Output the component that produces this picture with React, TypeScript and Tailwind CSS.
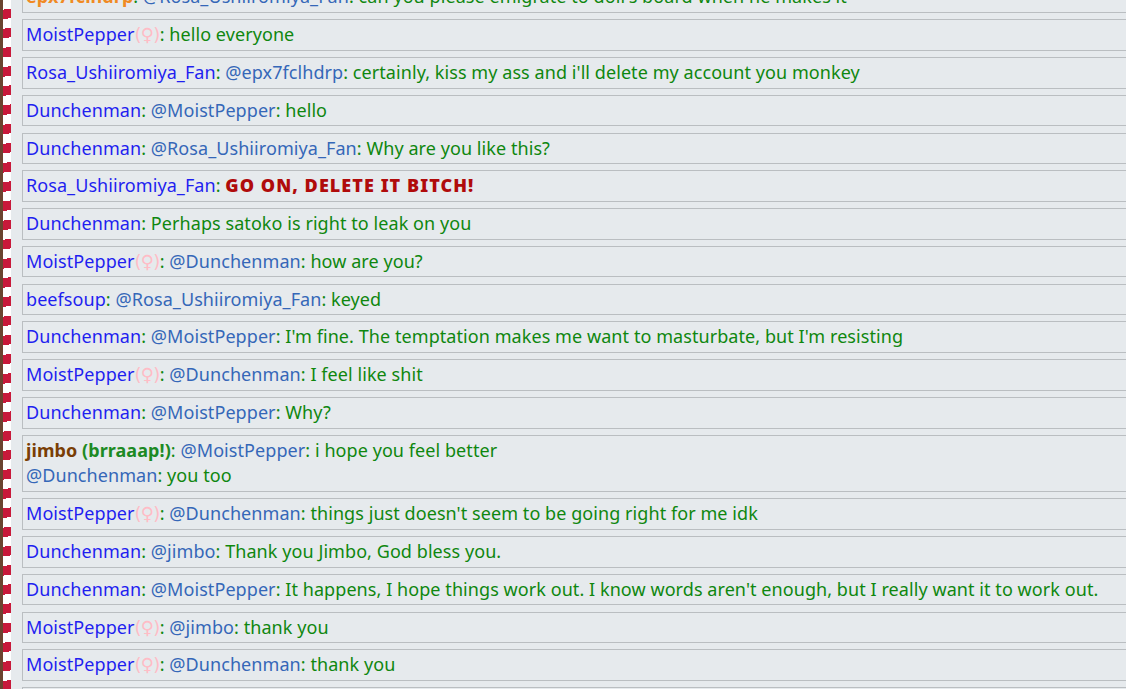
import React from "react";

type Part = { t: string; k: "user" | "mention" | "msg" | "sex" | "bold" | "jimbo" | "tag" | "orange" };

const rows: Part[][] = [
  [
    { t: "epx7fclhdrp", k: "orange" },
    { t: ": ", k: "msg" },
    { t: "@Rosa_Ushiiromiya_Fan", k: "mention" },
    { t: ": can you please emigrate to doll's board when he makes it", k: "msg" },
  ],
  [
    { t: "MoistPepper", k: "user" },
    { t: "(♀)", k: "sex" },
    { t: ": hello everyone", k: "msg" },
  ],
  [
    { t: "Rosa_Ushiiromiya_Fan", k: "user" },
    { t: ": ", k: "msg" },
    { t: "@epx7fclhdrp", k: "mention" },
    { t: ": certainly, kiss my ass and i'll delete my account you monkey", k: "msg" },
  ],
  [
    { t: "Dunchenman", k: "user" },
    { t: ": ", k: "msg" },
    { t: "@MoistPepper", k: "mention" },
    { t: ": hello", k: "msg" },
  ],
  [
    { t: "Dunchenman", k: "user" },
    { t: ": ", k: "msg" },
    { t: "@Rosa_Ushiiromiya_Fan", k: "mention" },
    { t: ": Why are you like this?", k: "msg" },
  ],
  [
    { t: "Rosa_Ushiiromiya_Fan", k: "user" },
    { t: ": ", k: "msg" },
    { t: "GO ON, DELETE IT BITCH!", k: "bold" },
  ],
  [
    { t: "Dunchenman", k: "user" },
    { t: ": Perhaps satoko is right to leak on you", k: "msg" },
  ],
  [
    { t: "MoistPepper", k: "user" },
    { t: "(♀)", k: "sex" },
    { t: ": ", k: "msg" },
    { t: "@Dunchenman", k: "mention" },
    { t: ": how are you?", k: "msg" },
  ],
  [
    { t: "beefsoup", k: "user" },
    { t: ": ", k: "msg" },
    { t: "@Rosa_Ushiiromiya_Fan", k: "mention" },
    { t: ": keyed", k: "msg" },
  ],
  [
    { t: "Dunchenman", k: "user" },
    { t: ": ", k: "msg" },
    { t: "@MoistPepper", k: "mention" },
    { t: ": I'm fine. The temptation makes me want to masturbate, but I'm resisting", k: "msg" },
  ],
  [
    { t: "MoistPepper", k: "user" },
    { t: "(♀)", k: "sex" },
    { t: ": ", k: "msg" },
    { t: "@Dunchenman", k: "mention" },
    { t: ": I feel like shit", k: "msg" },
  ],
  [
    { t: "Dunchenman", k: "user" },
    { t: ": ", k: "msg" },
    { t: "@MoistPepper", k: "mention" },
    { t: ": Why?", k: "msg" },
  ],
  [
    { t: "jimbo", k: "jimbo" },
    { t: " (brraaap!)", k: "tag" },
    { t: ": ", k: "msg" },
    { t: "@MoistPepper", k: "mention" },
    { t: ": i hope you feel better\n", k: "msg" },
    { t: "@Dunchenman", k: "mention" },
    { t: ": you too", k: "msg" },
  ],
  [
    { t: "MoistPepper", k: "user" },
    { t: "(♀)", k: "sex" },
    { t: ": ", k: "msg" },
    { t: "@Dunchenman", k: "mention" },
    { t: ": things just doesn't seem to be going right for me idk", k: "msg" },
  ],
  [
    { t: "Dunchenman", k: "user" },
    { t: ": ", k: "msg" },
    { t: "@jimbo", k: "mention" },
    { t: ": Thank you Jimbo, God bless you.", k: "msg" },
  ],
  [
    { t: "Dunchenman", k: "user" },
    { t: ": ", k: "msg" },
    { t: "@MoistPepper", k: "mention" },
    { t: ": It happens, I hope things work out. I know words aren't enough, but I really want it to work out.", k: "msg" },
  ],
  [
    { t: "MoistPepper", k: "user" },
    { t: "(♀)", k: "sex" },
    { t: ": ", k: "msg" },
    { t: "@jimbo", k: "mention" },
    { t: ": thank you", k: "msg" },
  ],
  [
    { t: "MoistPepper", k: "user" },
    { t: "(♀)", k: "sex" },
    { t: ": ", k: "msg" },
    { t: "@Dunchenman", k: "mention" },
    { t: ": thank you", k: "msg" },
  ],
  [{ t: "Dunchenman", k: "user" }],
];

const styles: Record<Part["k"], string> = {
  user: "text-[#1f1ff0]",
  mention: "text-[#3567b8]",
  msg: "text-[#0f870f]",
  sex: "font-['DejaVu_Sans',sans-serif] tracking-[-0.7px] text-[#ffbcc6]",
  bold: "font-black tracking-[1.05px] text-[#b00b0b]",
  jimbo: "font-bold text-[#7a3e05]",
  tag: "font-bold text-[#1d8a24]",
  orange: "font-bold text-[#f08a24]",
};

const ChatRow = ({ parts }: { parts: Part[] }) => (
  <div className="mb-[6.2px] border border-r-0 border-[#babec1] px-[3px] py-[2px] leading-[25.6px] whitespace-pre-wrap">
    {parts.map((p, i) => (
      <span key={i} className={styles[p.k]}>
        {p.t}
      </span>
    ))}
  </div>
);

export default function App() {
  return (
    <div className="flex h-[689px] w-[1126px] overflow-hidden bg-[#e6eaed] font-['Noto_Sans',sans-serif] text-[18px] tracking-[0.07px]">
      <div className="flex w-[11px] shrink-0">
        <div className="w-[3px] bg-[#6b4430]" />
        <div className="w-[8px] bg-[repeating-linear-gradient(172deg,#ffffff_0px,#ffffff_9.5px,#c8193a_9.5px,#c8193a_19px)]" />
      </div>
      <div className="ml-[11px] w-[1140px] shrink-0 -mt-[18.6px]">
        {rows.map((r, i) => (
          <ChatRow key={i} parts={r} />
        ))}
      </div>
    </div>
  );
}
